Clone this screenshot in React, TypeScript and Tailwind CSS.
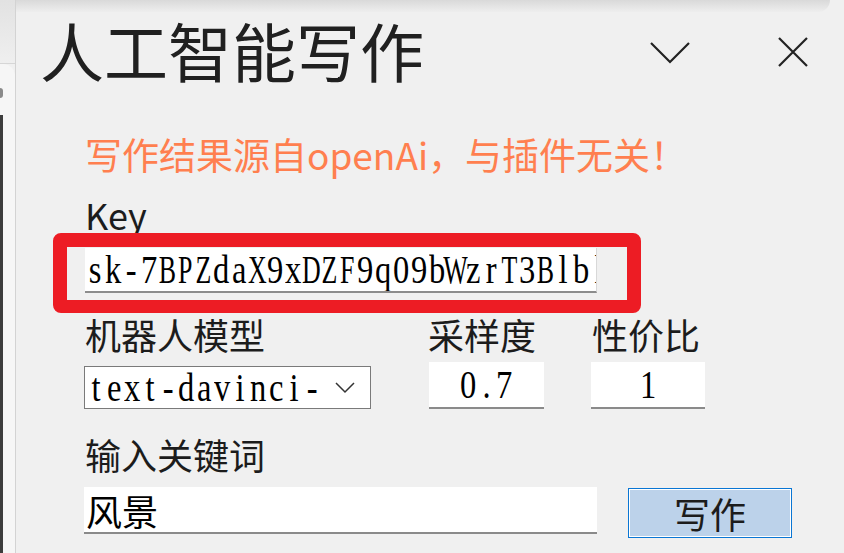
import React from "react";

const Mono = ({ text }: { text: string }) => (
  <span className="flex font-['Liberation_Serif',serif] text-[37px] leading-[37px] text-black">
    {text.split("").map((c, i) => (
      <span key={i} className="w-[18px] shrink-0 flex justify-center">
        <span
          className={
            /[A-Z]/.test(c)
              ? "inline-block scale-x-[0.7] scale-y-[1.1]"
              : "inline-block scale-x-[0.88] scale-y-[1.1]"
          }
        >
          {c}
        </span>
      </span>
    ))}
  </span>
);

export default function App() {
  return (
    <div className="w-[844px] h-[553px] flex bg-[#f0f0f0] overflow-hidden font-['Noto_Sans_CJK_SC',sans-serif] text-[#1c1c1c]">
      {/* left strip */}
      <div className="w-[16px] shrink-0 flex flex-col border-r border-[#d3d3d3]">
        <div className="h-[64px] shrink-0 border-b border-[#d6d6d6] bg-linear-to-b from-[#e2e2e2] to-[#efefef]" />
        <div className="flex-1 bg-[#f6f6f6] rounded-tr-[12px] flex flex-col">
          <div className="mt-[24px] w-[3px] h-[10px] bg-[#8a8a8a] rounded-r-full" />
          <div className="mt-[17px] flex-1 w-[3px] bg-[#3d3d3d]" />
        </div>
      </div>

      {/* main */}
      <div className="flex-1 flex flex-col">
        <div className="h-[12px] shrink-0 mr-[14px] rounded-br-[14px] bg-linear-to-b from-[#d9d9d9] to-[#eeeeee]" />

        {/* header */}
        <div className="h-[124px] shrink-0 flex items-start pl-[24px]">
          <h1 className="mt-[5px] text-[64px] leading-[64px] text-[#202020] whitespace-nowrap">人工智能写作</h1>
          <svg className="ml-auto mt-[29px]" width="42" height="24" viewBox="0 0 42 24" fill="none">
            <path d="M2 2 L21 21 L40 2" stroke="#222" strokeWidth="2.2" />
          </svg>
          <svg className="ml-[86px] mt-[24px] mr-[35px]" width="32" height="32" viewBox="0 0 32 32" fill="none">
            <path d="M2 2 L30 30 M30 2 L2 30" stroke="#222" strokeWidth="2.2" />
          </svg>
        </div>

        {/* content */}
        <div className="flex flex-col pl-[68px]">
          <p className="ml-[1px] text-[37px] leading-[36px] text-[#ff7f4f] whitespace-nowrap">
            写作结果源自openAi，与插件无关！
          </p>
          <p className="ml-[1px] mt-[24px] text-[36px] leading-[36px]">Key</p>

          <div className="-ml-[31px] mt-[1px] w-[588px] h-[80px] border-[14px] border-b-[13px] border-[#ed1c24] rounded-[8px] pl-[18px] pt-[1px]">
            <div className="w-[512px] h-[45px] bg-white border-b-2 border-b-[#8c8c8c] border-r border-r-[#d8d8d8] overflow-hidden flex items-center pl-[1px]">
              <Mono text="sk-7BPZdaX9xDZF9q09bWzrT3Blbl" />
            </div>
          </div>

          {/* labels row */}
          <div className="mt-[3px] flex text-[36px] leading-[36px]">
            <div className="w-[287px] pl-[1px]">机器人模型</div>
            <div className="ml-[58px] w-[115px] -indent-[1px]">采样度</div>
            <div className="ml-[47px] w-[114px] pl-[1px]">性价比</div>
          </div>

          {/* controls row */}
          <div className="mt-[10px] flex items-start">
            <div className="mt-[4px] w-[287px] h-[43px] border border-[#7a7a7a] bg-white flex items-center pl-[2px]">
              <Mono text="text-davinci-" />
              <svg className="ml-auto mr-[14px]" width="22" height="14" viewBox="0 0 22 14" fill="none">
                <path d="M2 2 L11 11 L20 2" stroke="#333" strokeWidth="1.5" />
              </svg>
            </div>
            <div className="ml-[58px] w-[115px] h-[47px] bg-white border-b-2 border-[#8a8a8a] flex items-center justify-center">
              <Mono text="0.7" />
            </div>
            <div className="ml-[47px] w-[114px] h-[47px] bg-white border-b-2 border-[#8a8a8a] flex items-center justify-center">
              <Mono text="1" />
            </div>
          </div>

          <p className="ml-[1px] mt-[27px] text-[36px] leading-[36px]">输入关键词</p>

          <div className="mt-[15px] flex items-start">
            <div className="w-[513px] h-[47px] bg-white border-b-2 border-[#8a8a8a] flex items-center pl-[2px] text-[36px] text-black">
              风景
            </div>
            <button className="ml-[31px] mt-[1px] w-[164px] h-[50px] border border-[#0a76d4] shadow-[inset_0_0_0_1px_#ffffff] bg-[#bcd2ea] flex items-center justify-center text-[36px] leading-[36px] text-[#1c1c1c]">
              写作
            </button>
          </div>
        </div>
      </div>
    </div>
  );
}
